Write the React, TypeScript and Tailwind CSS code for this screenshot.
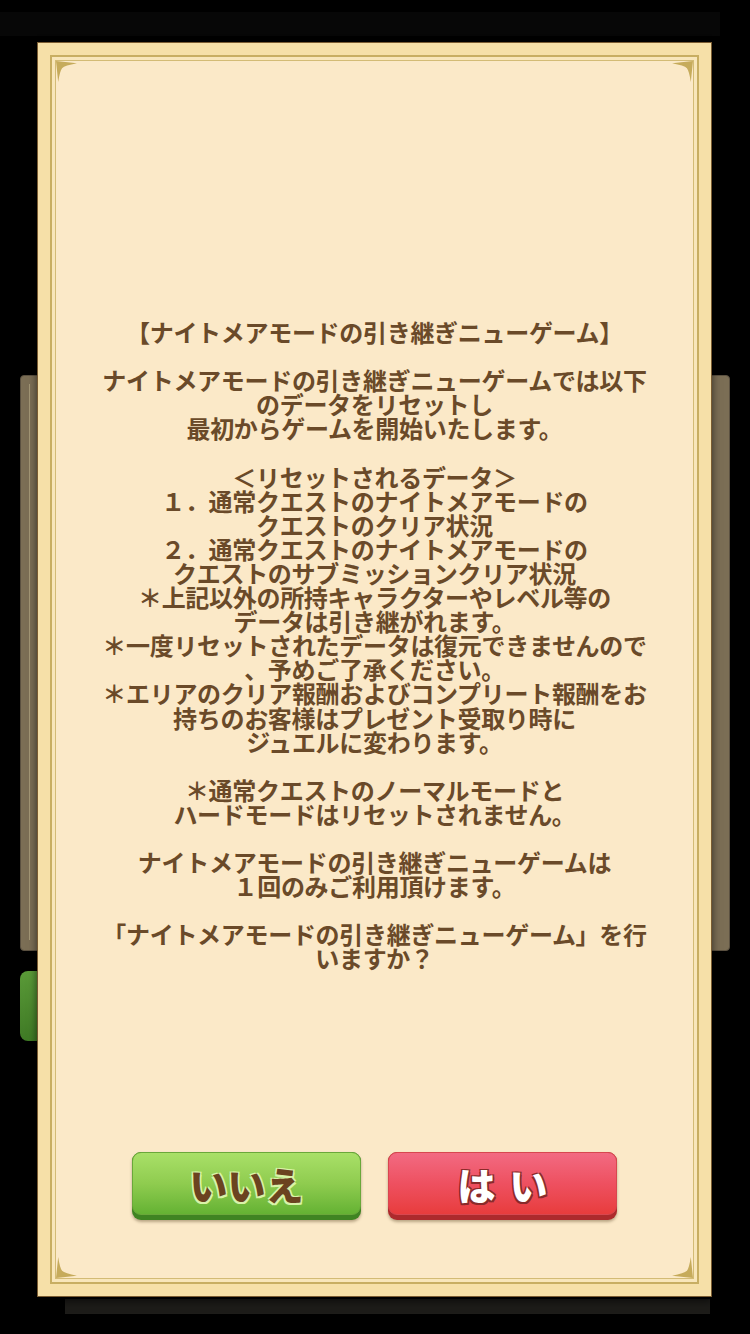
import React from "react";

const lines = [
  "【ナイトメアモードの引き継ぎニューゲーム】",
  "",
  "ナイトメアモードの引き継ぎニューゲームでは以下",
  "のデータをリセットし",
  "最初からゲームを開始いたします。",
  "",
  "＜リセットされるデータ＞",
  "１．通常クエストのナイトメアモードの",
  "クエストのクリア状況",
  "２．通常クエストのナイトメアモードの",
  "クエストのサブミッションクリア状況",
  "＊上記以外の所持キャラクターやレベル等の",
  "データは引き継がれます。",
  "＊一度リセットされたデータは復元できませんので",
  "、予めご了承ください。",
  "＊エリアのクリア報酬およびコンプリート報酬をお",
  "持ちのお客様はプレゼント受取り時に",
  "ジュエルに変わります。",
  "",
  "＊通常クエストのノーマルモードと",
  "ハードモードはリセットされません。",
  "",
  "ナイトメアモードの引き継ぎニューゲームは",
  "１回のみご利用頂けます。",
  "",
  "「ナイトメアモードの引き継ぎニューゲーム」を行",
  "いますか？",
];

function Corner({ className }: { className: string }) {
  return (
    <svg viewBox="0 0 20 20" className={className} width="22" height="22">
      <path d="M0 0 L19 2 Q8 4 5.5 6.5 Q3.5 9 2 19 Z" fill="#c6ab5b" />
    </svg>
  );
}

export default function App() {
  return (
    <div
      className="relative w-[750px] h-[1334px] bg-black overflow-hidden"
      style={{ fontFamily: '"Noto Sans CJK JP", "Noto Sans", sans-serif' }}
    >
      {/* background scene behind the dialog */}
      <div className="absolute left-0 top-[12px] w-[720px] h-[24px] bg-[#070707]" />
      <div className="absolute left-[20px] top-[375px] w-[30px] h-[576px] bg-[#7b6e55] border border-[#5a5040] rounded-sm">
        <div className="ml-[8px] mt-[8px] w-[6px] h-[556px] border-l border-[#a39676]" />
      </div>
      <div className="absolute left-[700px] top-[375px] w-[30px] h-[576px] bg-[#7b6e55] border border-[#5a5040] rounded-sm" />
      <div className="absolute left-[20px] top-[971px] w-[30px] h-[70px] rounded-[8px] bg-gradient-to-b from-[#5a9a38] to-[#3f7a25]" />
      <div className="absolute left-[65px] top-[1299px] w-[645px] h-[15px] bg-[#1d1c19]" />

      {/* dialog */}
      <div className="relative ml-[37px] mt-[42px] w-[675px] h-[1255px] border border-[#7a5c32] bg-[#f6e0a8] p-[12px] shadow-[0_4px_8px_rgba(0,0,0,0.6)]">
        <div className="h-full border-2 border-[#c8ae62] bg-[#f8e6ba] p-[3px]">
          <div className="relative h-full border border-[#d3bb75] bg-[#fbe9c8] flex flex-col items-center pt-[259px] pb-[58px]">
            <Corner className="absolute left-0 top-0" />
            <Corner className="absolute right-0 top-0 -scale-x-100" />
            <Corner className="absolute left-0 bottom-0 -scale-y-100" />
            <Corner className="absolute right-0 bottom-0 -scale-100" />

            <div className="text-center text-[24px] leading-[24.1px] font-bold text-[#6a4a29] tracking-[-0.3px]">
              {lines.map((l, i) => (
                <div key={i} className="h-[24.1px] whitespace-nowrap">
                  {l}
                </div>
              ))}
            </div>

            <div className="mt-auto flex gap-[27px]">
              <button className="w-[229px] h-[68px] rounded-[9px] bg-[#3f8422] pb-[5px] shadow-[0_2px_3px_rgba(60,40,10,0.35)]">
                <div className="h-full rounded-[9px] bg-gradient-to-b from-[#a9e068] via-[#8fcc4f] to-[#64b233] border border-[#6aa83a] flex items-center justify-center">
                  <span className="text-[38px] font-black text-[#6b4320] leading-none [text-shadow:1.5px_1.5px_0_#d9f3a8,-1.5px_-1.5px_0_#d9f3a8,1.5px_-1.5px_0_#d9f3a8,-1.5px_1.5px_0_#d9f3a8,0_2px_0_#d9f3a8]">
                    いいえ
                  </span>
                </div>
              </button>
              <button className="w-[229px] h-[68px] rounded-[9px] bg-[#ad2a2c] pb-[5px] shadow-[0_2px_3px_rgba(60,40,10,0.35)]">
                <div className="h-full rounded-[9px] bg-gradient-to-b from-[#f26a82] via-[#ee5060] to-[#e83c3c] border border-[#d8474f] flex items-center justify-center">
                  <span className="text-[38px] font-black text-white leading-none tracking-[14px] pl-[14px] [text-shadow:1.5px_1.5px_0_#8a2a2a,-1.5px_-1.5px_0_#8a2a2a,1.5px_-1.5px_0_#8a2a2a,-1.5px_1.5px_0_#8a2a2a,0_2px_0_#8a2a2a]">
                    はい
                  </span>
                </div>
              </button>
            </div>
          </div>
        </div>
      </div>
    </div>
  );
}
